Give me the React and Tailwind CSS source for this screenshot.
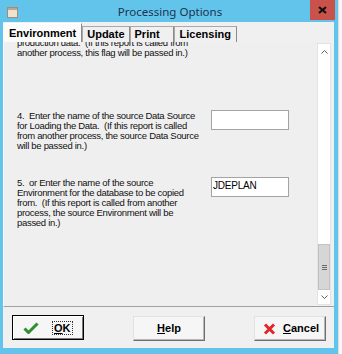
import React from "react";

const body = { fontFamily: '"Liberation Sans", Arial, sans-serif' };
const ui = { fontFamily: '"Liberation Sans", Arial, sans-serif' };

const Tab = ({ label, active, className = "px-[5px]" }) => (
  <div
    className={
      (active
        ? "h-[19px] flex items-center bg-[#fbfbfb] border-t border-l border-r border-t-white border-l-white border-r-[#8a8a8a] text-[11px] font-bold text-black "
        : "h-[16px] mt-[3px] flex items-center bg-[#f0f0f0] border-t border-l border-r border-t-[#a8a8a8] border-l-[#a8a8a8] border-r-[#8a8a8a] text-[11px] font-bold text-black ") +
      className
    }
  >
    {label}
  </div>
);

const Lines = ({ lines, className = "" }) => (
  <div className={"text-[9.5px] leading-[10px] tracking-[-0.3px] text-[#111] " + className} style={body}>
    {lines.map((l, i) => (
      <div key={i} className="whitespace-pre">
        {l}
      </div>
    ))}
  </div>
);

const Btn = ({ children, def, className = "" }) => (
  <button
    className={
      "h-[25px] w-[72px] flex items-center bg-[#f6f6f6] text-[11px] font-bold text-black " +
      (def
        ? "border border-black shadow-[inset_1px_1px_0_#fff,inset_-1px_-1px_0_#7a7a7a] "
        : "border-t border-l border-r border-b border-t-[#e2e2e2] border-l-[#e2e2e2] border-r-[#6e6e6e] border-b-[#6e6e6e] shadow-[inset_-1px_-1px_0_#b8b8b8] ") +
      className
    }
    style={ui}
  >
    {children}
  </button>
);

export default function App() {
  return (
    <div className="w-[342px] h-[354px] flex bg-[#f4f4f4] overflow-hidden">
      <div className="w-[338px] h-[354px] flex flex-col bg-[#62c4ea]">
        {/* title bar */}
        <div className="h-[22px] flex items-start relative">
          <svg width="11" height="11" viewBox="0 0 11 11" className="absolute left-[7px] top-[7px]">
            <rect x="0.5" y="0.5" width="10" height="10" fill="#efe3cf" stroke="#9c8f7d" />
            <rect x="1" y="1" width="9" height="2" fill="#b7a893" />
          </svg>
          <div
            className="flex-1 text-center text-[11.5px] leading-[24px] text-[#1d3350] pl-[2px]"
            style={{ fontFamily: '"Noto Sans", "Open Sans", sans-serif' }}
          >
            Processing Options
          </div>
          <div className="absolute right-[3px] top-0 w-[25px] h-[20px] bg-[#c9524b] flex items-center justify-center">
            <svg width="9" height="8" viewBox="0 0 9 8">
              <path d="M1 1 L8 7 M8 1 L1 7" stroke="#111" strokeWidth="2.2" />
            </svg>
          </div>
        </div>

        {/* client */}
        <div className="mx-[3px] mr-[4px] h-[326px] bg-[#f0f0f0] flex flex-col">
          <div className="h-[20px] flex items-end pt-[2px]" style={ui}>
            <Tab label="Environment" active className="px-[5px]" />
            <Tab label="Update" className="px-[4px]" />
            <Tab label="Print" className="pl-[4px] pr-[13px]" />
            <Tab label="Licensing" className="px-[5px]" />
          </div>

          {/* panel */}
          <div className="h-[265px] flex border-l border-b border-l-white border-b-[#a0a0a0] bg-[#efefef] overflow-hidden">
            <div className="flex-1 pl-[13px] pt-0 overflow-hidden">
              <div className="h-[16px] overflow-hidden">
                <Lines
                  className="-mt-[4px]"
                  lines={[
                    "production data.  (If this report is called from",
                    "another process, this flag will be passed in.)",
                  ]}
                />
              </div>

              <div className="flex mt-[52px]">
                <Lines
                  className="w-[194px] pt-[1px]"
                  lines={[
                    "4.  Enter the name of the source Data Source",
                    "for Loading the Data.  (If this report is called",
                    "from another process, the source Data Source",
                    "will be passed in.)",
                  ]}
                />
                <div className="w-[78px] h-[20px] bg-white border border-[#a3a3a3]" />
              </div>

              <div className="flex mt-[26px]">
                <Lines
                  className="w-[194px] pt-[1px]"
                  lines={[
                    "5.  or Enter the name of the source",
                    "Environment for the database to be copied",
                    "from.  (If this report is called from another",
                    "process, the source Environment will be",
                    "passed in.)",
                  ]}
                />
                <div className="w-[78px] h-[20px] bg-white border border-[#a3a3a3] pl-[1px] text-[10px] leading-[16px] tracking-[-0.2px] text-black" style={body}>
                  JDEPLAN
                </div>
              </div>
            </div>

            {/* scrollbar */}
            <div className="w-[14px] mr-[3px] mt-[1px] mb-[1px] flex flex-col bg-white border border-[#e3e3e3]">
              <div className="h-[16px] flex items-center justify-center">
                <svg width="7" height="4" viewBox="0 0 7 4">
                  <path d="M0.5 3.5 L3.5 0.5 L6.5 3.5" stroke="#606060" fill="none" />
                </svg>
              </div>
              <div className="flex-1 flex flex-col justify-end">
                <div className="h-[46px] bg-[#d6d6d6] border border-[#c2c2c2] flex items-center justify-center">
                  <svg width="5" height="5" viewBox="0 0 5 5">
                    <path d="M0 0.5 H5 M0 2.5 H5 M0 4.5 H5" stroke="#6a6a6a" />
                  </svg>
                </div>
              </div>
              <div className="h-[14px] flex items-center justify-center">
                <svg width="7" height="4" viewBox="0 0 7 4">
                  <path d="M0.5 0.5 L3.5 3.5 L6.5 0.5" stroke="#606060" fill="none" />
                </svg>
              </div>
            </div>
          </div>

          {/* buttons */}
          <div className="flex justify-between items-start pl-[9px] pr-[8px] pt-[8px]">
            <Btn def className="pl-[10px]">
              <svg width="16" height="12" viewBox="0 0 16 12">
                <path d="M1.5 6.5 L5.5 10.5 L14.5 1.5" stroke="#2f8f2f" strokeWidth="3" fill="none" />
              </svg>
              <span className="ml-[14px] px-[1px] leading-[12px] outline outline-1 outline-dotted outline-[#333]">
                <span className="underline">O</span>K
              </span>
            </Btn>
            <Btn className="justify-center mt-[1px]">
              <span>
                <span className="underline">H</span>elp
              </span>
            </Btn>
            <Btn className="pl-[8px] mt-[1px]">
              <svg width="13" height="12" viewBox="0 0 13 12">
                <path d="M2 1.5 L11 10.5 M11 1.5 L2 10.5" stroke="#e3262b" strokeWidth="3" />
              </svg>
              <span className="ml-[7px]">
                <span className="underline">C</span>ancel
              </span>
            </Btn>
          </div>
        </div>
      </div>
      <div className="flex-1 bg-[#f6f6f6] border-l border-[#dcdcdc]" />
    </div>
  );
}
